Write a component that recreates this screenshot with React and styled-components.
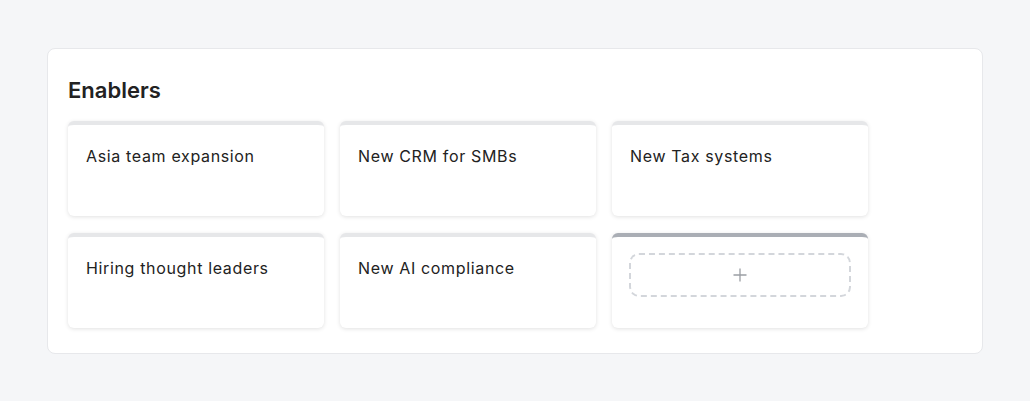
import React from "react";
import styled, { createGlobalStyle } from "styled-components";

const Global = createGlobalStyle`
  html, body { margin: 0; padding: 0; background: #f5f6f8; }
  body { font-family: Inter, "Open Sans", sans-serif; color: #1f1f1f; }
`;

const Page = styled.div`
  padding: 48px 47px;
`;

const Panel = styled.section`
  box-sizing: border-box;
  width: 936px;
  height: 306px;
  background: #ffffff;
  border: 1px solid #e7e8eb;
  border-radius: 8px;
  padding: 26px 20px 0;
`;

const Title = styled.h2`
  margin: 0 0 16px;
  font-size: 22px;
  line-height: 30px;
  font-weight: 600;
  letter-spacing: 0;
  color: #222;
`;

const Grid = styled.div`
  display: grid;
  grid-template-columns: repeat(3, 256px);
  column-gap: 16px;
  row-gap: 17px;
`;

const Card = styled.div`
  box-sizing: border-box;
  height: 95px;
  background: #fff;
  border-radius: 6px;
  border-top: 4px solid ${(p) => (p.$accent ? "#aaaeb5" : "#e6e7e9")};
  box-shadow: 0 1px 4px rgba(0, 0, 0, 0.12);
  padding: ${(p) => (p.$accent ? "16px 17px" : "19px 18px")};
`;

const CardText = styled.div`
  font-size: 16px;
  line-height: 24px;
  letter-spacing: 0.65px;
  color: #222;
`;

const AddBox = styled.button`
  box-sizing: border-box;
  width: 100%;
  height: 44px;
  border: 2px dashed #d3d6db;
  border-radius: 10px;
  background: transparent;
  display: flex;
  align-items: center;
  justify-content: center;
  padding: 0;
  cursor: pointer;
`;

const items = [
  "Asia team expansion",
  "New CRM for SMBs",
  "New Tax systems",
  "Hiring thought leaders",
  "New AI compliance",
];

export default function App() {
  return (
    <>
      <Global />
      <Page>
        <Panel>
          <Title>Enablers</Title>
          <Grid>
            {items.map((t) => (
              <Card key={t}>
                <CardText>{t}</CardText>
              </Card>
            ))}
            <Card $accent>
              <AddBox aria-label="Add">
                <svg width="14" height="14" viewBox="0 0 14 14">
                  <path d="M7 0.5V13.5M0.5 7H13.5" stroke="#9b9ea4" strokeWidth="1.3" />
                </svg>
              </AddBox>
            </Card>
          </Grid>
        </Panel>
      </Page>
    </>
  );
}
